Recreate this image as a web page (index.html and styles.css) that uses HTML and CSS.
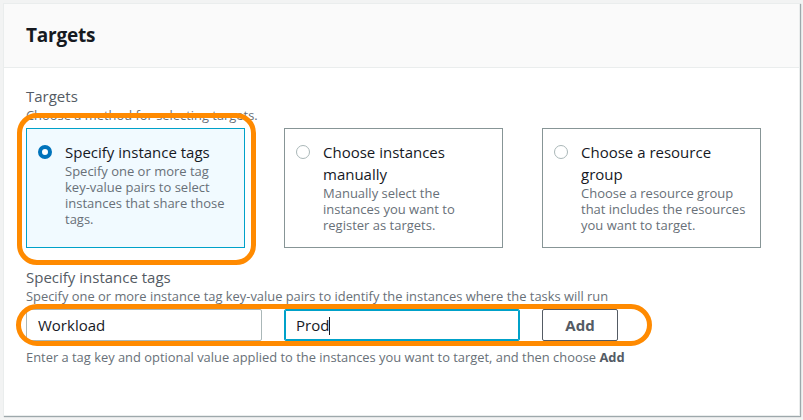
FILE: index.html
```html
<!DOCTYPE html>
<html lang="en">
<head>
<meta charset="utf-8">
<title>Targets</title>
<link rel="stylesheet" href="styles.css">
</head>
<body>
<section class="panel">
  <header class="panel-header"><h2>Targets</h2></header>
  <div class="panel-body">
    <div class="field-label">Targets</div>
    <div class="field-desc">Choose a method for selecting targets.</div>
    <div class="tiles">
      <label class="tile selected">
        <span class="radio checked"></span>
        <span class="tile-text">
          <span class="tile-title">Specify instance tags</span>
          <span class="tile-desc">Specify one or more tag key-value pairs to select instances that share those tags.</span>
        </span>
        <span class="highlight tile-highlight"></span>
      </label>
      <label class="tile">
        <span class="radio"></span>
        <span class="tile-text">
          <span class="tile-title">Choose instances manually</span>
          <span class="tile-desc">Manually select the instances you want to register as targets.</span>
        </span>
      </label>
      <label class="tile">
        <span class="radio"></span>
        <span class="tile-text">
          <span class="tile-title">Choose a resource group</span>
          <span class="tile-desc">Choose a resource group that includes the resources you want to target.</span>
        </span>
      </label>
    </div>
    <div class="field-label second">Specify instance tags</div>
    <div class="field-desc">Specify one or more instance tag key-value pairs to identify the instances where the tasks will run</div>
    <div class="tag-row">
      <div class="input">Workload</div>
      <div class="input focused">Prod<span class="caret"></span></div>
      <button class="btn">Add</button>
      <span class="highlight row-highlight"></span>
    </div>
    <div class="help">Enter a tag key and optional value applied to the instances you want to target, and then choose <b>Add</b></div>
  </div>
</section>
</body>
</html>
```
FILE: styles.css
```css
* { box-sizing: border-box; }
html, body { margin: 0; padding: 0; }
body {
  background: #f2f3f3;
  font-family: "Open Sans", "Noto Sans", sans-serif;
  color: #16191f;
  width: 803px;
  height: 420px;
  overflow: hidden;
}
.panel {
  margin: 3px 0 0 3px;
  width: 797px;
  height: 413px;
  background: #fff;
  border: 1px solid #eaeded;
  box-shadow: 1px 1px 1px 0 rgba(0, 28, 36, 0.35);
}
.panel-header {
  background: #fafafa;
  height: 64px;
  border-bottom: 1px solid #eaeded;
  padding: 0 22px 1px;
  display: flex;
  align-items: center;
}
.panel-header h2 {
  margin: 0;
  font-size: 19px;
  font-weight: 700;
  color: #16191f;
  letter-spacing: -0.2px;
}
.panel-body {
  padding: 17px 22px 0;
}
.field-label {
  font-size: 15px;
  line-height: 22px;
  color: #545b64;
}
.field-label.second { margin-top: 18px; }
.field-desc {
  font-size: 12.9px;
  line-height: 16px;
  color: #687078;
}
.tiles {
  display: grid;
  grid-template-columns: repeat(3, 219px);
  column-gap: 39px;
  margin-top: 5px;
}
.tile {
  position: relative;
  height: 120px;
  border: 1px solid #879596;
  padding: 12px 10px 0 11px;
  display: flex;
  gap: 13px;
  background: #fff;
}
.tile.selected {
  border-color: #00a1c9;
  background: #f1faff;
}
.radio {
  flex: none;
  width: 14px;
  height: 14px;
  margin-top: 4px;
  border-radius: 50%;
  border: 1px solid #aab7b8;
  background: #fff;
}
.radio.checked {
  border: 4px solid #0073bb;
}
.tile-text { display: flex; flex-direction: column; }
.tile-title {
  font-size: 15px;
  line-height: 22px;
  color: #16191f;
}
.tile-desc {
  font-size: 13px;
  line-height: 16px;
  color: #687078;
}
.highlight {
  position: absolute;
  border: 5px solid #ff8a00;
  pointer-events: none;
}
.tile-highlight {
  top: -16px;
  left: -10px;
  right: -12px;
  bottom: -18px;
  border-radius: 20px;
}
.tag-row {
  position: relative;
  display: flex;
  gap: 22px;
  margin-top: 5px;
  width: 592px;
}
.input {
  width: 236px;
  height: 32px;
  border: 1px solid #aab7b8;
  border-radius: 2px;
  padding: 0 11px;
  font-size: 15px;
  line-height: 30px;
  color: #16191f;
  background: #fff;
}
.input.focused {
  border-color: #00a1c9;
  box-shadow: 0 0 0 1px #00a1c9 inset;
}
.caret {
  display: inline-block;
  width: 1px;
  height: 18px;
  background: #16191f;
  vertical-align: -4px;
}
.btn {
  width: 76px;
  height: 32px;
  border: 1px solid #545b64;
  border-radius: 2px;
  background: #fff;
  font-family: inherit;
  font-size: 15px;
  font-weight: 700;
  color: #545b64;
  padding: 0;
}
.row-highlight {
  top: -5px;
  left: -10px;
  right: -34px;
  bottom: -5px;
  border-radius: 21px;
}
.help {
  margin-top: 8px;
  font-size: 12.9px;
  line-height: 16px;
  color: #687078;
}
.help b { color: #545b64; }
```
